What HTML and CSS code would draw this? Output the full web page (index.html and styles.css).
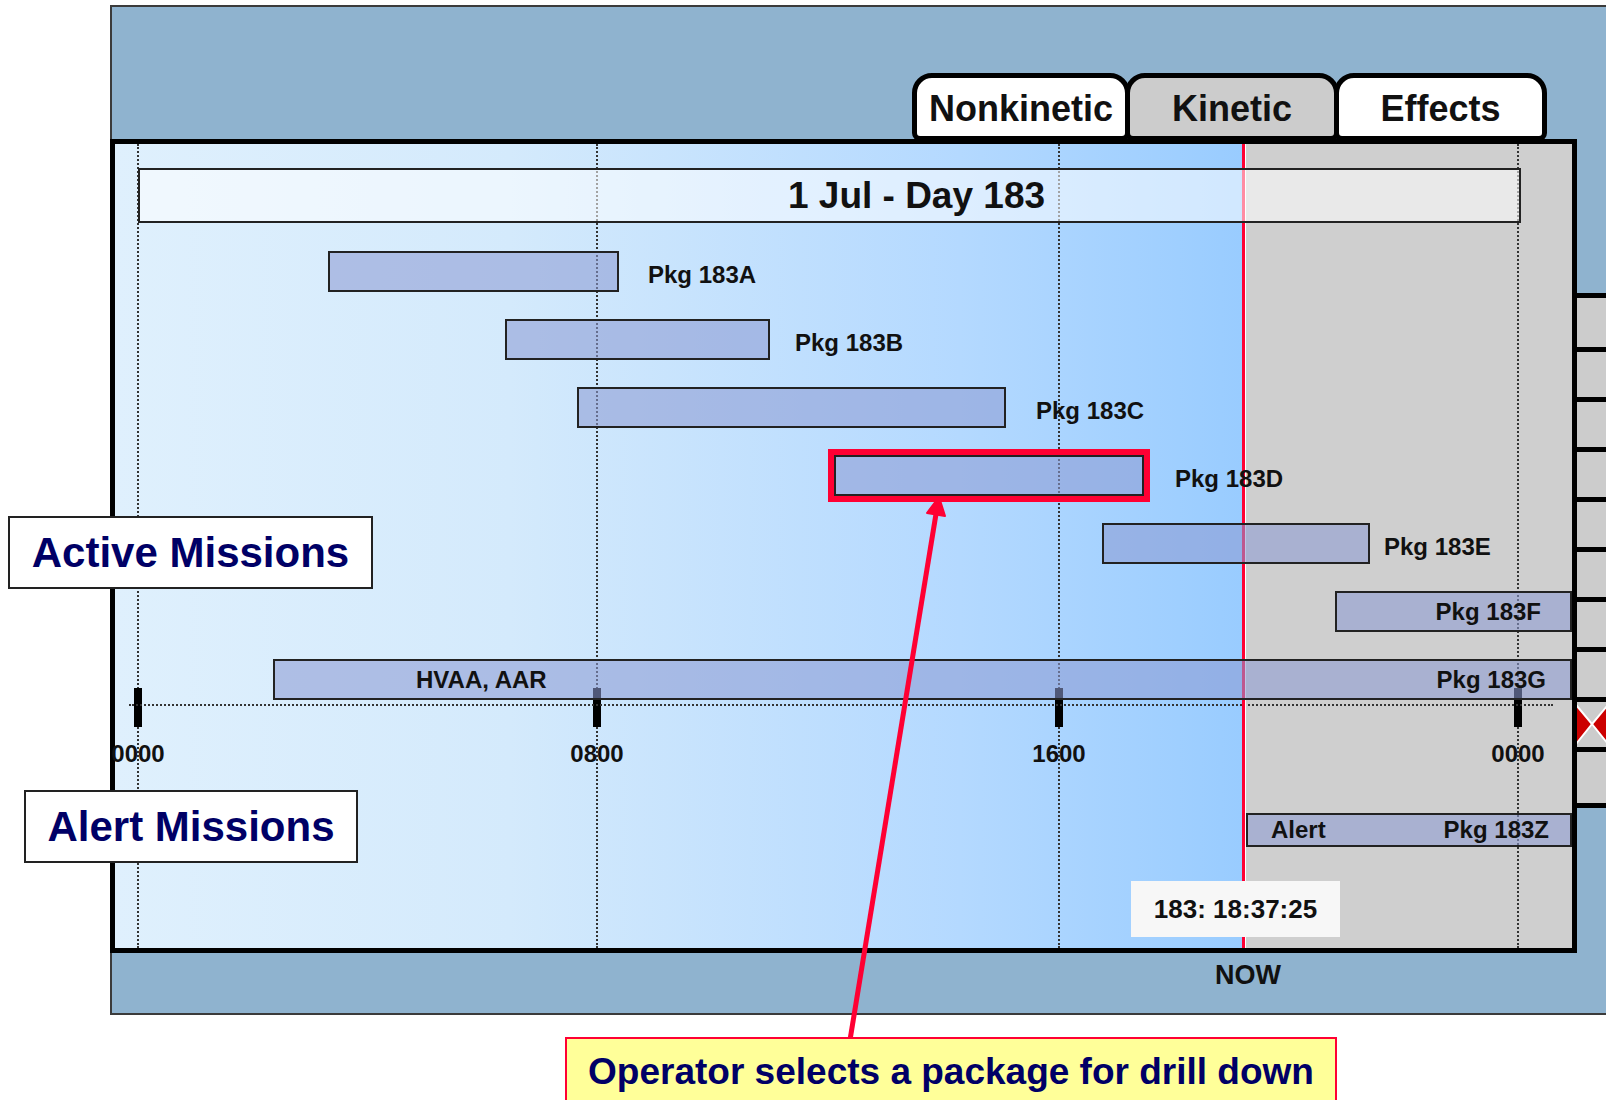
FILE: index.html
```html
<!DOCTYPE html>
<html lang="en">
<head>
    <meta charset="UTF-8">
    <meta name="viewport" content="width=device-width, initial-scale=1.0">
    <title>Package Timeline</title>
    <link rel="stylesheet" href="styles.css">
</head>
<body>
    <div class="slide">
        <div class="console">
            <div class="tabs">
                <div class="tab">Nonkinetic</div>
                <div class="tab tab-active">Kinetic</div>
                <div class="tab">Effects</div>
            </div>
            <div class="console-body">
                <div class="frame">
                    <!-- time marks -->
                    <div class="mark" style="left: 23px"><span class="tick"></span><span class="mark-label">0000</span></div>
                    <div class="mark" style="left: 482px"><span class="tick"></span><span class="mark-label">0800</span></div>
                    <div class="mark" style="left: 944px"><span class="tick"></span><span class="mark-label">1600</span></div>
                    <div class="mark" style="left: 1403px"><span class="tick"></span><span class="mark-label">0000</span></div>
                    <div class="axis-line"></div>
                    <div class="now-line"></div>

                    <div class="day-header">1 Jul - Day 183</div>

                    <div class="lanes">
                        <div class="lane">
                            <div class="bar" style="left: 213px; width: 291px"></div>
                            <span class="pkg" style="left: 533px">Pkg 183A</span>
                        </div>
                        <div class="lane">
                            <div class="bar" style="left: 390px; width: 265px"></div>
                            <span class="pkg" style="left: 680px">Pkg 183B</span>
                        </div>
                        <div class="lane">
                            <div class="bar" style="left: 462px; width: 429px"></div>
                            <span class="pkg" style="left: 921px">Pkg 183C</span>
                        </div>
                        <div class="lane">
                            <div class="bar bar-selected" style="left: 719px; width: 310px"></div>
                            <span class="pkg" style="left: 1060px">Pkg 183D</span>
                        </div>
                        <div class="lane">
                            <div class="bar" style="left: 987px; width: 268px"></div>
                            <span class="pkg" style="left: 1269px">Pkg 183E</span>
                        </div>
                        <div class="lane">
                            <div class="bar bar-end" style="left: 1220px; width: 237px">Pkg 183F</div>
                        </div>
                        <div class="lane">
                            <div class="bar bar-split bar-g" style="left: 158px; width: 1299px"><span>HVAA, AAR</span><span>Pkg 183G</span></div>
                        </div>
                    </div>

                    <div class="lane lane-alert">
                        <div class="bar bar-split bar-z" style="left: 1131px; width: 326px"><span>Alert</span><span>Pkg 183Z</span></div>
                    </div>

                    <div class="clock">183: 18:37:25</div>
                </div>
                <div class="side">
                    <div class="cell cell-first"></div>
                    <div class="cell"></div>
                    <div class="cell"></div>
                    <div class="cell"></div>
                    <div class="cell"></div>
                    <div class="cell"></div>
                    <div class="cell"></div>
                    <div class="cell"></div>
                    <div class="cell cell-bowtie">
                        <svg width="40" height="45" viewBox="0 0 40 45">
                            <polygon points="0,-2 20,22 0,47" fill="#cc0000" stroke="#fff" stroke-width="2"/>
                            <polygon points="40,-2 20,22 40,47" fill="#cc0000" stroke="#fff" stroke-width="2"/>
                        </svg>
                    </div>
                    <div class="cell cell-last"></div>
                </div>
            </div>
            <div class="now-label">NOW</div>
        </div>

        <div class="mission mission-active">Active Missions</div>
        <div class="mission mission-alert">Alert Missions</div>

        <svg class="pointer" width="1606" height="1100" viewBox="0 0 1606 1100">
            <line x1="850" y1="1040" x2="936" y2="514" stroke="#ff0033" stroke-width="5"/>
            <polygon points="939,497 945,516 927,513" fill="#ff0033" stroke="#ff0033" stroke-width="2" stroke-linejoin="round"/>
        </svg>

        <div class="callout">Operator selects a package for drill down</div>
    </div>
</body>
</html>
```

FILE: styles.css
```css
body {
    margin: 0;
    background-color: #fff;
    font-family: "Liberation Sans", Arial, sans-serif;
    color: #111;
}

.slide {
    position: relative;
    width: 1606px;
    height: 1100px;
    overflow: hidden;
}

.console {
    box-sizing: border-box;
    width: 1560px;
    height: 1010px;
    margin: 5px 0 0 110px;
    background-color: #8fb3cf;
    border: 2px solid #3b3b3b;
}

/* Tabs */
.tabs {
    display: flex;
    align-items: flex-end;
    height: 132px;
    padding-left: 800px;
}

.tab {
    position: relative;
    z-index: 1;
    box-sizing: border-box;
    display: flex;
    align-items: center;
    justify-content: center;
    width: 213px;
    height: 68px;
    margin-bottom: -2px;
    padding-top: 4px;
    background-color: #fff;
    border: 5px solid #000;
    border-radius: 20px 20px 8px 8px;
    font-size: 36px;
    font-weight: bold;
}

.tab:first-child {
    width: 218px;
}

.tab + .tab {
    margin-left: -5px;
    width: 214px;
}

.tab:last-child {
    width: 213px;
}

.tab-active {
    background-color: #ccc;
}

.console-body {
    display: flex;
    align-items: flex-start;
}

/* Timeline frame */
.frame {
    position: relative;
    flex: none;
    box-sizing: border-box;
    width: 1467px;
    height: 814px;
    margin-left: -2px;
    padding-top: 24px;
    border: 5px solid #000;
    background: linear-gradient(90deg, #dff0fd 0%, #d4eafc 35%, #b4d9ff 75%, #99ccff 100%) 0 0 / 1127px 100% no-repeat, #cfcfcf;
}

.mark {
    position: absolute;
    top: 0;
    bottom: 0;
    width: 0;
    margin-left: -1px;
    border-left: 2px dotted #333;
}

.tick {
    position: absolute;
    top: 544px;
    left: -5px;
    width: 8px;
    height: 39px;
    background-color: #000;
}

.mark-label {
    position: absolute;
    top: 596px;
    left: -1px;
    transform: translateX(-50%);
    font-size: 24px;
    font-weight: bold;
    line-height: 28px;
    white-space: nowrap;
}

.axis-line {
    position: absolute;
    top: 560px;
    left: 14px;
    width: 1424px;
    border-top: 2px dotted #333;
}

.now-line {
    position: absolute;
    top: 0;
    bottom: 0;
    left: 1127px;
    width: 3px;
    background-color: #ff0033;
    border-right: 1px solid #fff;
}

.day-header {
    position: relative;
    box-sizing: border-box;
    width: 1383px;
    height: 55px;
    margin-left: 23px;
    padding-left: 174px;
    background-color: rgba(255, 255, 255, 0.55);
    border: 2px solid #222;
    font-size: 37px;
    font-weight: bold;
    line-height: 51px;
    text-align: center;
}

.lanes {
    display: flex;
    flex-direction: column;
    gap: 27px;
    margin-top: 28px;
}

.lane {
    position: relative;
    height: 41px;
}

.lane-alert {
    position: absolute;
    top: 669px;
    left: 0;
    right: 0;
    height: 34px;
}

.bar {
    position: absolute;
    top: 0;
    bottom: 0;
    box-sizing: border-box;
    display: flex;
    align-items: center;
    background-color: rgba(140, 155, 211, 0.57);
    border: 2px solid #222;
    font-size: 24px;
    font-weight: bold;
    white-space: nowrap;
}

.bar-selected {
    outline: 6px solid #ff0033;
}

.bar-end {
    justify-content: flex-end;
    padding-right: 29px;
}

.bar-split {
    justify-content: space-between;
}

.bar-g {
    padding: 0 24px 0 141px;
}

.bar-z {
    padding: 0 21px 0 23px;
}

.pkg {
    position: absolute;
    top: 3px;
    font-size: 24px;
    font-weight: bold;
    line-height: 41px;
    white-space: nowrap;
}

.clock {
    position: absolute;
    top: 737px;
    left: 1016px;
    width: 209px;
    height: 56px;
    background-color: #f7f7f7;
    font-size: 26px;
    font-weight: bold;
    line-height: 56px;
    text-align: center;
}

/* Right-hand cells */
.side {
    flex: none;
    width: 60px;
    margin-top: 154px;
    background-color: #ccc;
}

.cell {
    box-sizing: border-box;
    height: 50px;
    border-top: 5px solid #000;
}

.cell-first {
    height: 54px;
}

.cell-last {
    height: 61px;
    border-bottom: 5px solid #000;
}

.cell-bowtie svg {
    display: block;
    margin-left: -5px;
    overflow: visible;
}

.now-label {
    margin: 8px 0 0 1103px;
    font-size: 27px;
    font-weight: bold;
    line-height: 28px;
}

/* Overlays */
.mission {
    position: absolute;
    box-sizing: border-box;
    display: flex;
    align-items: center;
    justify-content: center;
    height: 73px;
    background-color: #fff;
    border: 2px solid #222;
    color: #000066;
    font-size: 42px;
    font-weight: bold;
    white-space: nowrap;
}

.mission-active {
    top: 516px;
    left: 8px;
    width: 365px;
}

.mission-alert {
    top: 790px;
    left: 24px;
    width: 334px;
}

.pointer {
    position: absolute;
    top: 0;
    left: 0;
    pointer-events: none;
}

.callout {
    position: absolute;
    top: 1037px;
    left: 565px;
    box-sizing: border-box;
    width: 772px;
    height: 90px;
    padding-top: 11px;
    background-color: #ffff99;
    border: 2px solid #ff0033;
    color: #000066;
    font-size: 37px;
    font-weight: bold;
    line-height: 44px;
    text-align: center;
    white-space: nowrap;
}
```
